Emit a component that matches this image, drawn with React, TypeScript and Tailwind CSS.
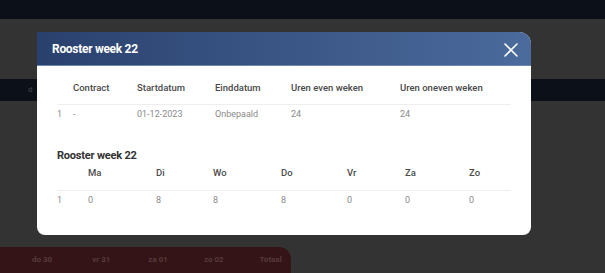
import React from "react";

const t1Cols = "grid grid-cols-[16px_64px_78px_76px_109px_1fr]";
const t2Cols = "grid grid-cols-[31px_68px_57px_68px_66px_58px_64px_1fr]";

export default function App() {
  return (
    <div className="relative w-[605px] h-[273px] overflow-hidden bg-[#333333] font-['Roboto',_'Liberation_Sans',_sans-serif]">
      <div className="h-[19px] bg-[#0c1018]" />
      <div className="h-[60px]" />
      <div className="h-[22px] bg-[#0c1119] flex items-center pl-[28px]">
        <span className="text-[8px] font-medium text-[#3a3f47]">d</span>
      </div>
      <div className="h-[146px]" />
      <div className="h-[26px] w-[291px] bg-[#341416] rounded-tr-[12px] flex items-center text-[8px] font-bold text-[#573a3d]">
        <span className="ml-[32px]">do 30</span>
        <span className="ml-[40px]">vr 31</span>
        <span className="ml-[38px]">za 01</span>
        <span className="ml-[36px]">zo 02</span>
        <span className="ml-[36px]">Totaal</span>
      </div>

      <div className="absolute left-[37px] top-[32px] w-[494px] h-[203px] bg-white rounded-tr-[12px] rounded-b-[8px] overflow-hidden">
        <div className="h-[34px] bg-gradient-to-r from-[#2a416e] to-[#4b6b9d] flex items-center justify-between pl-[15px] pr-[13px] border-b border-[#6f86ad]">
          <span className="text-white text-[12px] font-bold tracking-[-0.3px]">Rooster week 22</span>
          <svg width="14" height="14" viewBox="0 0 14 14" className="mt-[2px]">
            <path d="M1 1 L13 13 M13 1 L1 13" stroke="white" strokeWidth="1.6" strokeLinecap="round" />
          </svg>
        </div>
        <div className="px-[20px] pt-[11px]">
          <div className={`${t1Cols} h-[28px] pb-[4px] items-center border-b border-[#eeeeee] text-[9.5px] font-medium text-[#4a4a4a]`}>
            <span />
            <span>Contract</span>
            <span>Startdatum</span>
            <span>Einddatum</span>
            <span>Uren even weken</span>
            <span>Uren oneven weken</span>
          </div>
          <div className={`${t1Cols} h-[19px] items-center text-[9px] text-[#8a8a8a]`}>
            <span>1</span>
            <span>-</span>
            <span>01-12-2023</span>
            <span>Onbepaald</span>
            <span>24</span>
            <span>24</span>
          </div>
          <div className="mt-[25px] h-[14px] flex items-center text-[11px] font-bold text-[#333333] tracking-[-0.2px]">
            Rooster week 22
          </div>
          <div className={`${t2Cols} h-[28px] pb-[6px] items-center border-b border-[#eeeeee] text-[9.5px] font-medium text-[#4a4a4a]`}>
            <span />
            <span>Ma</span>
            <span>Di</span>
            <span>Wo</span>
            <span>Do</span>
            <span>Vr</span>
            <span>Za</span>
            <span>Zo</span>
          </div>
          <div className={`${t2Cols} h-[19px] items-center text-[9px] text-[#8a8a8a]`}>
            <span>1</span>
            <span>0</span>
            <span>8</span>
            <span>8</span>
            <span>8</span>
            <span>0</span>
            <span>0</span>
            <span>0</span>
          </div>
        </div>
      </div>
    </div>
  );
}
